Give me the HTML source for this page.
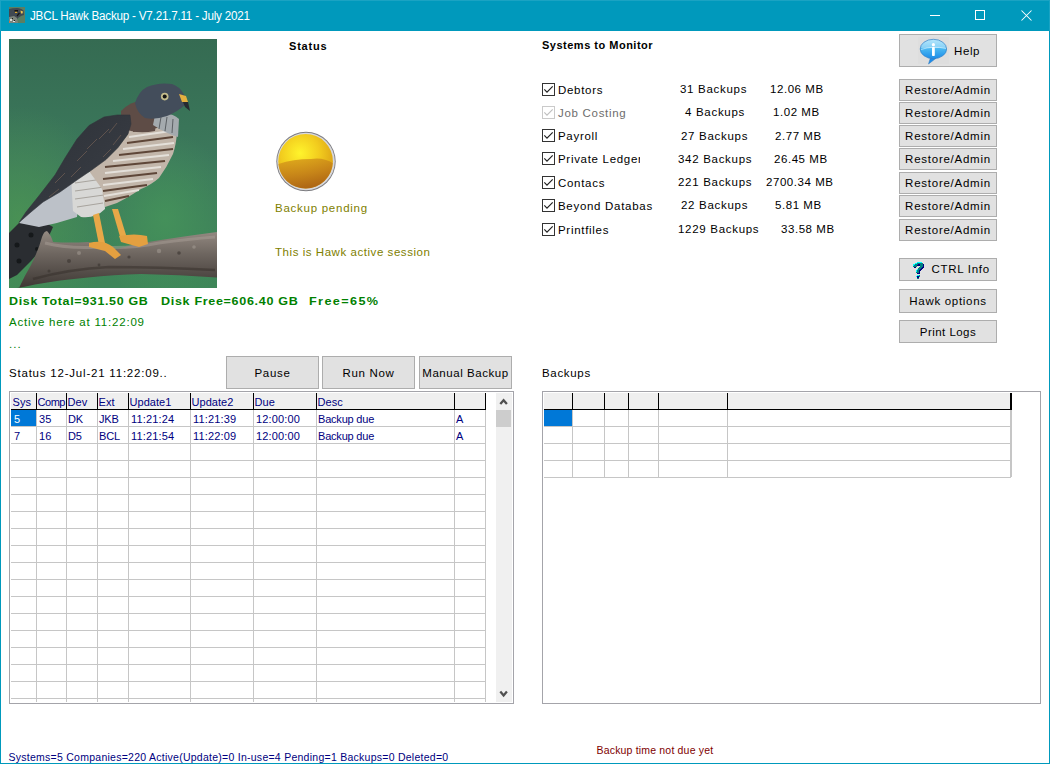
<!DOCTYPE html>
<html><head><meta charset="utf-8">
<style>
*{box-sizing:border-box;margin:0;padding:0}
html,body{width:1050px;height:764px;overflow:hidden;background:#fff}
body{position:relative;font-family:"Liberation Sans",sans-serif;font-size:12px;color:#000}
.a{position:absolute;white-space:pre;line-height:1}
.btn{position:absolute;background:#e1e1e1;border:1px solid #adadad;text-align:center;color:#000}
.btn span{position:absolute;left:0;right:0;white-space:pre;line-height:1}
.cb{position:absolute;width:13px;height:13px;border:1px solid #333;background:#fff}
.cb svg{position:absolute;left:0;top:0}
</style></head><body>

<div style="position:absolute;left:0;top:0;width:1050px;height:764px;border:1px solid #0099bc;border-top:none"></div>
<div style="position:absolute;left:0;top:0;width:1050px;height:31px;background:#0099bc"></div>
<div style="position:absolute;left:0;top:0;width:1050px;height:1px;background:#1aa3c3"></div>
<div style="position:absolute;left:0px;top:0px;width:1px;height:31px;background:#1aa3c3;"></div>
<div style="position:absolute;left:1049px;top:0px;width:1px;height:31px;background:#1aa3c3;"></div>
<svg style="position:absolute;left:9px;top:7px" width="16" height="16" viewBox="0 0 16 16">
  <rect width="16" height="16" fill="#5c7e62"/>
  <path d="M0 2 Q4 0.8 9 1 Q13 1.5 14.5 3.5 L15 8 L12 9 L9 11 L7 14 L6 16 L0 16Z" fill="#404852"/>
  <path d="M0 10 L5 9 L8 11 L9 16 L0 16Z" fill="#7c847c"/>
  <rect x="1" y="12" width="2" height="2" fill="#d8dcd8"/><rect x="4" y="14" width="2" height="1" fill="#e0e0e0"/>
  <rect x="0" y="14" width="1" height="2" fill="#c07850"/><rect x="3" y="11" width="1" height="1" fill="#1a1a1a"/><rect x="5" y="13" width="1" height="1" fill="#1a1a1a"/>
  <rect x="5.5" y="3" width="3.5" height="1.6" fill="#111"/>
  <rect x="6" y="4.8" width="2.2" height="1.2" fill="#e0a828"/>
  <path d="M11.5 3.5 L14 4.5 L13.5 6.5 L12 6.5Z" fill="#ecc454"/>
  <path d="M10.5 6 L8 9" stroke="#151515" stroke-width="1.2"/>
</svg>
<div class="a" style="left:30px;top:10px;font-size:12.5px;color:#fff;letter-spacing:-0.25px;transform-origin:0 0;transform:scaleX(0.935);">JBCL Hawk Backup - V7.21.7.11 - July 2021</div>
<div style="position:absolute;left:930px;top:15px;width:10px;height:1px;background:#fff;"></div>
<div style="position:absolute;left:975px;top:10px;width:10px;height:10px;border:1px solid #fff"></div>
<svg style="position:absolute;left:1021px;top:10px" width="11" height="11" viewBox="0 0 11 11"><path d="M0.5 0.5 L10.5 10.5 M10.5 0.5 L0.5 10.5" stroke="#fff" stroke-width="1.05"/></svg>
<svg style="position:absolute;left:9px;top:39px" width="208" height="249" viewBox="0 0 208 249">
  <defs>
    <linearGradient id="hbg" x1="0" y1="0" x2="0" y2="1">
      <stop offset="0" stop-color="#356b52"/>
      <stop offset="0.5" stop-color="#3c795c"/>
      <stop offset="1" stop-color="#3e8658"/>
    </linearGradient>
    <radialGradient id="hbl" cx="0.05" cy="0.72" r="0.45">
      <stop offset="0" stop-color="#4e9852" stop-opacity="0.7"/>
      <stop offset="1" stop-color="#4e9852" stop-opacity="0"/>
    </radialGradient>
    <radialGradient id="hbr" cx="0.75" cy="0.72" r="0.35">
      <stop offset="0" stop-color="#46955a" stop-opacity="0.8"/>
      <stop offset="1" stop-color="#46955a" stop-opacity="0"/>
    </radialGradient>
    <linearGradient id="hbr2" x1="0" y1="0" x2="0" y2="1">
      <stop offset="0" stop-color="#948a82"/>
      <stop offset="0.4" stop-color="#6e6660"/>
      <stop offset="1" stop-color="#3e3834"/>
    </linearGradient>
    <linearGradient id="hwing" x1="0" y1="0" x2="1" y2="1">
      <stop offset="0" stop-color="#2c3036"/>
      <stop offset="1" stop-color="#3c4048"/>
    </linearGradient>
  </defs>
  <rect width="208" height="249" fill="url(#hbg)"/>
  <rect width="208" height="249" fill="url(#hbl)"/>
  <rect width="208" height="249" fill="url(#hbr)"/>
  <!-- tail -->
  <path d="M0 194 L10 184 L30 180 L44 188 L36 206 L22 222 L8 236 L0 240Z" fill="#2a2d31"/>
  <g fill="#15181a"><circle cx="8" cy="206" r="2.5"/><circle cx="22" cy="196" r="2.5"/><circle cx="10" cy="222" r="2.5"/><circle cx="28" cy="210" r="2"/></g>
  <!-- grey undertail -->
  <path d="M10 184 L30 158 L50 150 L66 140 L70 160 L68 178 Q50 184 30 188Z" fill="#bcc1c8"/>
  <!-- white thigh -->
  <path d="M62 137 L94 130 L96 170 Q86 180 72 178 L64 172Z" fill="#d8d8d6"/>
  <g stroke="#a8a49e" stroke-width="1.2"><path d="M66 144 L94 140"/><path d="M66 152 L95 148"/><path d="M66 160 L95 156"/><path d="M68 168 L94 164"/></g>
  <!-- breast -->
  <path d="M118 68 Q140 68 158 76 Q167 84 168 94 Q167 106 164 115 Q158 128 150 139 Q142 146 132 150 Q120 158 108 164 L96 168 L93 150 L80 132 L97 120 L109 108 L119 95Z" fill="#c2b6aa"/>
  <g stroke="#5e4638" stroke-width="2.2" fill="none">
    <path d="M124 92 L160 86"/><path d="M118 104 L164 98"/><path d="M110 116 L164 110"/>
    <path d="M96 128 L156 122"/><path d="M94 140 L148 134"/><path d="M94 152 L138 146"/><path d="M96 162 L120 157"/>
  </g>
  <g stroke="#e4e0da" stroke-width="1.8" fill="none">
    <path d="M120 98 L162 92"/><path d="M114 110 L165 104"/><path d="M104 122 L160 116"/>
    <path d="M96 134 L152 128"/><path d="M94 146 L144 140"/><path d="M95 157 L130 151"/>
  </g>
  <!-- nape brown -->
  <path d="M112 72 Q122 62 132 62 L148 78 L146 92 Q126 96 112 88Z" fill="#5e4c46"/>
  <!-- wing -->
  <path d="M121 76 L108 76 L95 78 L80 86.5 L68 100 L56 119 L46 136 L30.6 156 L17 173 L10 183.5 L22 173 L34 163 L51 153 L68 141 L83 130.8 L97 120.6 L109 108.6 L119 95 L122 85Z" fill="url(#hwing)" stroke="#30343a" stroke-width="0.6" stroke-linejoin="round"/>
  <g stroke="#6a5a52" stroke-width="1" opacity="0.8">
    <path d="M108 84 L100 94"/><path d="M100 90 L90 100"/><path d="M112 96 L104 106"/><path d="M88 100 L78 110"/>
    <path d="M102 110 L94 118"/><path d="M78 112 L68 122"/><path d="M72 128 L62 138"/><path d="M56 134 L46 144"/><path d="M50 150 L40 158"/>
  </g>
  <!-- head -->
  <path d="M146 76 Q162 72 170 80 L169 98 Q156 94 144 86Z" fill="#a4aaae"/>
  <g stroke="#4a4e52" stroke-width="1" opacity="0.8"><path d="M152 78 L150 90"/><path d="M158 78 L156 92"/><path d="M164 80 L163 94"/></g>
  <path d="M126 64 Q130 52 138 48 Q150 43 163 45 Q171 48 174 54 L177 59 L176 66 Q168 73 158 77 Q146 81 136 79 Q128 74 126 64Z" fill="#434d5b"/>
  <path d="M170 55 L177 57 L179 63 L173 63Z" fill="#e4b040"/>
  <path d="M174 63 L179 63 L181 72 L176 68Z" fill="#262a30"/>
  <circle cx="155.7" cy="57.6" r="3.8" fill="#c4bc8c"/>
  <circle cx="155.7" cy="57.6" r="2" fill="#141414"/>
  <!-- legs -->
  <path d="M84 176 L90 174 L96 204 L90 206Z" fill="#e8a848"/>
  <path d="M103 170 L109 170 L118 199 L112 201Z" fill="#e8a848"/>
  <!-- branch -->
  <path d="M10 249 Q16 236 22 226 Q30 210 33 198 Q35 192 38 192 Q42 196 44 203 Q60 204 79 203 Q94 206 107.6 210 Q122 206 139.4 203 Q170 198 208 193 L208 238.4 Q170 236 132.3 235 Q104 236 79 238.4 Q50 241 26 245.4 Q14 248 8 249Z" fill="url(#hbr2)"/>
  <path d="M36 204 Q60 210 90 208 Q120 210 150 204 Q180 200 206 198" stroke="#a89e96" stroke-width="3" fill="none" opacity="0.5"/>
  <path d="M24 240 Q60 230 100 228 Q150 228 206 231" stroke="#302a26" stroke-width="2.5" fill="none" opacity="0.45"/>
  <g fill="#3a3430" opacity="0.6"><circle cx="60" cy="222" r="2"/><circle cx="120" cy="218" r="1.6"/><circle cx="170" cy="214" r="1.8"/><circle cx="40" cy="232" r="1.5"/><circle cx="90" cy="226" r="1.4"/></g>
  <g fill="#a8a098" opacity="0.5"><circle cx="150" cy="212" r="2.2"/><circle cx="185" cy="208" r="1.8"/><circle cx="70" cy="214" r="2"/></g>
  <!-- feet -->
  <path d="M80 204 Q94 200 104 208 L112 216 L106 220 L96 212 Q88 210 80 208Z" fill="#e4a040"/>
  <path d="M110 197 Q126 194 138 197 L139 205 L130 208 L112 203Z" fill="#e4a040"/>
</svg>

<div class="a" style="left:289px;top:41px;font-size:11px;color:#000;font-weight:bold;letter-spacing:0.8px;">Status</div>
<svg style="position:absolute;left:275px;top:130px" width="62" height="63" viewBox="0 0 62 63">
  <defs>
    <radialGradient id="yl" cx="0.4" cy="0.35" r="0.7">
      <stop offset="0" stop-color="#fff42c"/>
      <stop offset="0.5" stop-color="#f2cc1e"/>
      <stop offset="1" stop-color="#d89c14"/>
    </radialGradient>
    <linearGradient id="yb" x1="0" y1="0" x2="0.3" y2="1">
      <stop offset="0" stop-color="#dca21a"/>
      <stop offset="0.6" stop-color="#c07a18"/>
      <stop offset="1" stop-color="#a85e14"/>
    </linearGradient>
  </defs>
  <circle cx="31" cy="31.5" r="29.7" fill="#7c7c80"/>
  <circle cx="31" cy="31.5" r="28.8" fill="#d8d8dc"/>
  <circle cx="30.6" cy="31.3" r="27.3" fill="url(#yl)"/>
  <path d="M3.4 34 Q18 29 36 29 Q48 27 57.8 33 A27.3 27.3 0 0 1 3.4 34 Z" fill="url(#yb)" opacity="0.85"/>
</svg>
<div class="a" style="left:275px;top:203px;font-size:11.5px;color:#808000;letter-spacing:0.74px;">Backup pending</div>
<div class="a" style="left:275px;top:247px;font-size:11.5px;color:#808000;letter-spacing:0.55px;">This is Hawk active session</div>
<div class="a" style="left:542px;top:40px;font-size:11px;color:#000;font-weight:bold;letter-spacing:0.5px;">Systems to Monitor</div>
<div class="cb" style="left:542px;top:83px;border-color:#333"><svg width="13" height="13" viewBox="0 0 13 13"><path d="M1.3 5.3 L4 8.1 L9.7 2.3" fill="none" stroke="#222" stroke-width="1.2"/></svg></div>
<div class="a" style="left:558px;top:85px;font-size:11.5px;color:#000;letter-spacing:0.7px;">Debtors</div>
<div class="a" style="left:680px;top:84px;font-size:11.5px;color:#000;letter-spacing:0.7px;">31 Backups</div>
<div class="a" style="left:770px;top:84px;font-size:11.5px;color:#000;letter-spacing:0.55px;">12.06 MB</div>
<div class="cb" style="left:542px;top:106px;border-color:#cacaca"><svg width="13" height="13" viewBox="0 0 13 13"><path d="M1.3 5.3 L4 8.1 L9.7 2.3" fill="none" stroke="#c0c0c0" stroke-width="1.2"/></svg></div>
<div class="a" style="left:558px;top:108px;font-size:11.5px;color:#6d6d6d;letter-spacing:0.7px;">Job Costing</div>
<div class="a" style="left:685px;top:107px;font-size:11.5px;color:#000;letter-spacing:0.7px;">4 Backups</div>
<div class="a" style="left:773px;top:107px;font-size:11.5px;color:#000;letter-spacing:0.55px;">1.02 MB</div>
<div class="cb" style="left:542px;top:129px;border-color:#333"><svg width="13" height="13" viewBox="0 0 13 13"><path d="M1.3 5.3 L4 8.1 L9.7 2.3" fill="none" stroke="#222" stroke-width="1.2"/></svg></div>
<div class="a" style="left:558px;top:131px;font-size:11.5px;color:#000;letter-spacing:0.7px;">Payroll</div>
<div class="a" style="left:681px;top:131px;font-size:11.5px;color:#000;letter-spacing:0.7px;">27 Backups</div>
<div class="a" style="left:775px;top:131px;font-size:11.5px;color:#000;letter-spacing:0.55px;">2.77 MB</div>
<div class="cb" style="left:542px;top:152px;border-color:#333"><svg width="13" height="13" viewBox="0 0 13 13"><path d="M1.3 5.3 L4 8.1 L9.7 2.3" fill="none" stroke="#222" stroke-width="1.2"/></svg></div>
<div class="a" style="left:558px;top:154px;font-size:11.5px;color:#000;letter-spacing:0.7px;width:82px;overflow:hidden;height:14px;">Private Ledger</div>
<div class="a" style="left:678px;top:154px;font-size:11.5px;color:#000;letter-spacing:0.7px;">342 Backups</div>
<div class="a" style="left:774px;top:154px;font-size:11.5px;color:#000;letter-spacing:0.55px;">26.45 MB</div>
<div class="cb" style="left:542px;top:176px;border-color:#333"><svg width="13" height="13" viewBox="0 0 13 13"><path d="M1.3 5.3 L4 8.1 L9.7 2.3" fill="none" stroke="#222" stroke-width="1.2"/></svg></div>
<div class="a" style="left:558px;top:178px;font-size:11.5px;color:#000;letter-spacing:0.7px;">Contacs</div>
<div class="a" style="left:678px;top:177px;font-size:11.5px;color:#000;letter-spacing:0.7px;">221 Backups</div>
<div class="a" style="left:766px;top:177px;font-size:11.5px;color:#000;letter-spacing:0.55px;">2700.34 MB</div>
<div class="cb" style="left:542px;top:199px;border-color:#333"><svg width="13" height="13" viewBox="0 0 13 13"><path d="M1.3 5.3 L4 8.1 L9.7 2.3" fill="none" stroke="#222" stroke-width="1.2"/></svg></div>
<div class="a" style="left:558px;top:201px;font-size:11.5px;color:#000;letter-spacing:0.7px;width:96px;overflow:hidden;height:14px;">Beyond Databas</div>
<div class="a" style="left:681px;top:200px;font-size:11.5px;color:#000;letter-spacing:0.7px;">22 Backups</div>
<div class="a" style="left:775px;top:200px;font-size:11.5px;color:#000;letter-spacing:0.55px;">5.81 MB</div>
<div class="cb" style="left:542px;top:223px;border-color:#333"><svg width="13" height="13" viewBox="0 0 13 13"><path d="M1.3 5.3 L4 8.1 L9.7 2.3" fill="none" stroke="#222" stroke-width="1.2"/></svg></div>
<div class="a" style="left:558px;top:225px;font-size:11.5px;color:#000;letter-spacing:0.7px;">Printfiles</div>
<div class="a" style="left:678px;top:224px;font-size:11.5px;color:#000;letter-spacing:0.7px;">1229 Backups</div>
<div class="a" style="left:781px;top:224px;font-size:11.5px;color:#000;letter-spacing:0.55px;">33.58 MB</div>
<div class="btn" style="left:899px;top:34px;width:98px;height:33px"><div style="position:absolute;left:18px;top:2px;width:31px;height:27px;background:#dedede"></div>
  <svg style="position:absolute;left:18px;top:2px" width="31" height="28" viewBox="0 0 31 28">
    <defs>
      <linearGradient id="hb" x1="0" y1="0" x2="0" y2="1">
        <stop offset="0" stop-color="#b4e6fc"/><stop offset="0.45" stop-color="#86d0f6"/>
        <stop offset="0.47" stop-color="#4cbaf2"/><stop offset="1" stop-color="#1c8ce8"/>
      </linearGradient>
    </defs>
    <path d="M12.5 20.5 L10.5 27 L18 21.3Z" fill="#1e8ce8" stroke="#2a78c0" stroke-width="0.5"/>
    <ellipse cx="15.4" cy="12" rx="13.2" ry="9.7" fill="url(#hb)" stroke="#2f80c8" stroke-width="0.7"/>
    <path d="M3 12.5 Q15 8.5 28 11.5" stroke="#d8f2ff" stroke-width="0.8" fill="none" opacity="0.8"/>
    <circle cx="15.4" cy="7.7" r="1.6" fill="#fff"/>
    <rect x="14" y="10" width="2.8" height="9" rx="0.8" fill="#fff"/>
  </svg></div>
<div class="a" style="left:954px;top:46px;font-size:11.5px;color:#000;letter-spacing:0.6px;">Help</div>
<div class="btn" style="left:899px;top:79px;width:98px;height:22px"><span style="top:5px;font-size:11.5px;letter-spacing:0.75px">Restore/Admin</span></div>
<div class="btn" style="left:899px;top:102px;width:98px;height:22px"><span style="top:5px;font-size:11.5px;letter-spacing:0.75px">Restore/Admin</span></div>
<div class="btn" style="left:899px;top:125px;width:98px;height:22px"><span style="top:5px;font-size:11.5px;letter-spacing:0.75px">Restore/Admin</span></div>
<div class="btn" style="left:899px;top:148px;width:98px;height:22px"><span style="top:5px;font-size:11.5px;letter-spacing:0.75px">Restore/Admin</span></div>
<div class="btn" style="left:899px;top:172px;width:98px;height:22px"><span style="top:5px;font-size:11.5px;letter-spacing:0.75px">Restore/Admin</span></div>
<div class="btn" style="left:899px;top:195px;width:98px;height:22px"><span style="top:5px;font-size:11.5px;letter-spacing:0.75px">Restore/Admin</span></div>
<div class="btn" style="left:899px;top:219px;width:98px;height:22px"><span style="top:5px;font-size:11.5px;letter-spacing:0.75px">Restore/Admin</span></div>
<div class="btn" style="left:899px;top:258px;width:98px;height:23px"><svg style="position:absolute;left:0;top:0" width="96" height="21" shape-rendering="crispEdges"><rect x="17" y="3" width="5" height="1" fill="#00ffff"/><rect x="15" y="4" width="2" height="1" fill="#00ffff"/><rect x="17" y="4" width="6" height="1" fill="#008080"/><rect x="13" y="5" width="2" height="1" fill="#00ffff"/><rect x="15" y="5" width="3" height="1" fill="#008080"/><rect x="18" y="5" width="2" height="1" fill="#000080"/><rect x="20" y="5" width="3" height="1" fill="#008080"/><rect x="23" y="5" width="1" height="1" fill="#000080"/><rect x="13" y="6" width="1" height="1" fill="#00ffff"/><rect x="14" y="6" width="3" height="1" fill="#008080"/><rect x="17" y="6" width="3" height="1" fill="#000080"/><rect x="20" y="6" width="3" height="1" fill="#008080"/><rect x="23" y="6" width="1" height="1" fill="#000080"/><rect x="13" y="7" width="4" height="1" fill="#008080"/><rect x="20" y="7" width="3" height="1" fill="#008080"/><rect x="23" y="7" width="1" height="1" fill="#000080"/><rect x="14" y="8" width="2" height="1" fill="#000080"/><rect x="19" y="8" width="3" height="1" fill="#008080"/><rect x="22" y="8" width="2" height="1" fill="#000080"/><rect x="18" y="9" width="3" height="1" fill="#008080"/><rect x="21" y="9" width="2" height="1" fill="#000080"/><rect x="17" y="10" width="1" height="1" fill="#00ffff"/><rect x="18" y="10" width="2" height="1" fill="#008080"/><rect x="20" y="10" width="2" height="1" fill="#000080"/><rect x="16" y="11" width="1" height="1" fill="#00ffff"/><rect x="17" y="11" width="2" height="1" fill="#008080"/><rect x="19" y="11" width="2" height="1" fill="#000080"/><rect x="16" y="12" width="1" height="1" fill="#00ffff"/><rect x="17" y="12" width="2" height="1" fill="#008080"/><rect x="19" y="12" width="1" height="1" fill="#000080"/><rect x="16" y="13" width="3" height="1" fill="#008080"/><rect x="19" y="13" width="1" height="1" fill="#000080"/><rect x="17" y="14" width="3" height="1" fill="#000080"/><rect x="17" y="16" width="2" height="1" fill="#00ffff"/><rect x="19" y="16" width="1" height="1" fill="#008080"/><rect x="16" y="17" width="1" height="1" fill="#00ffff"/><rect x="17" y="17" width="2" height="1" fill="#000080"/><rect x="19" y="17" width="1" height="1" fill="#008080"/><rect x="17" y="18" width="2" height="1" fill="#000080"/><rect x="17" y="19" width="2" height="1" fill="#008080"/></svg></div>
<div class="a" style="left:931.5px;top:264px;font-size:11.5px;color:#000;letter-spacing:0.7px;">CTRL Info</div>
<div class="btn" style="left:899px;top:289px;width:98px;height:24px"><span style="top:6px;font-size:11.5px;letter-spacing:0.7px">Hawk options</span></div>
<div class="btn" style="left:899px;top:320px;width:98px;height:23px"><span style="top:6px;font-size:11.5px;letter-spacing:0.45px">Print Logs</span></div>
<div class="a" style="left:9px;top:296px;font-size:11px;color:#008000;font-weight:bold;letter-spacing:0.6px;transform-origin:0 0;transform:scaleX(1.13);">Disk Total=931.50 GB</div>
<div class="a" style="left:160.5px;top:296px;font-size:11px;color:#008000;font-weight:bold;letter-spacing:0.6px;transform-origin:0 0;transform:scaleX(1.14);">Disk Free=606.40 GB</div>
<div class="a" style="left:308.5px;top:296px;font-size:11px;color:#008000;font-weight:bold;letter-spacing:1.2px;transform-origin:0 0;transform:scaleX(1.15);">Free=65%</div>
<div class="a" style="left:9px;top:316.5px;font-size:11.5px;color:#008000;letter-spacing:0.8px;">Active here at 11:22:09</div>
<div class="a" style="left:9px;top:338.5px;font-size:11.5px;color:#008000;letter-spacing:1px;">...</div>
<div class="a" style="left:9px;top:368px;font-size:11.5px;color:#000;letter-spacing:0.79px;">Status 12-Jul-21 11:22:09..</div>
<div class="btn" style="left:226px;top:356px;width:93px;height:33px"><span style="top:11px;font-size:11.5px;letter-spacing:0.7px">Pause</span></div>
<div class="btn" style="left:322px;top:356px;width:93px;height:33px"><span style="top:11px;font-size:11.5px;letter-spacing:0.7px">Run Now</span></div>
<div class="btn" style="left:419px;top:356px;width:93px;height:33px"><span style="top:11px;font-size:11.5px;letter-spacing:0.55px">Manual Backup</span></div>
<div class="a" style="left:542px;top:368px;font-size:11.5px;color:#000;letter-spacing:0.67px;">Backups</div>
<div style="position:absolute;left:9px;top:391px;width:505px;height:313px;border:1px solid #a4a4aa;background:#fff"></div>
<div style="position:absolute;left:11px;top:393px;width:475px;height:16px;background:#efefef;"></div>
<div style="position:absolute;left:11px;top:409px;width:475px;height:1px;background:#000;"></div>
<div style="position:absolute;left:36px;top:393px;width:1px;height:17px;background:#000;"></div>
<div style="position:absolute;left:36px;top:410px;width:1px;height:292px;background:#c6c6c6;"></div>
<div style="position:absolute;left:66px;top:393px;width:1px;height:17px;background:#000;"></div>
<div style="position:absolute;left:66px;top:410px;width:1px;height:292px;background:#c6c6c6;"></div>
<div style="position:absolute;left:97px;top:393px;width:1px;height:17px;background:#000;"></div>
<div style="position:absolute;left:97px;top:410px;width:1px;height:292px;background:#c6c6c6;"></div>
<div style="position:absolute;left:128px;top:393px;width:1px;height:17px;background:#000;"></div>
<div style="position:absolute;left:128px;top:410px;width:1px;height:292px;background:#c6c6c6;"></div>
<div style="position:absolute;left:190px;top:393px;width:1px;height:17px;background:#000;"></div>
<div style="position:absolute;left:190px;top:410px;width:1px;height:292px;background:#c6c6c6;"></div>
<div style="position:absolute;left:253px;top:393px;width:1px;height:17px;background:#000;"></div>
<div style="position:absolute;left:253px;top:410px;width:1px;height:292px;background:#c6c6c6;"></div>
<div style="position:absolute;left:316px;top:393px;width:1px;height:17px;background:#000;"></div>
<div style="position:absolute;left:316px;top:410px;width:1px;height:292px;background:#c6c6c6;"></div>
<div style="position:absolute;left:454px;top:393px;width:1px;height:17px;background:#000;"></div>
<div style="position:absolute;left:454px;top:410px;width:1px;height:292px;background:#c6c6c6;"></div>
<div style="position:absolute;left:485px;top:393px;width:1px;height:17px;background:#000;"></div>
<div style="position:absolute;left:485px;top:410px;width:1px;height:292px;background:#c6c6c6;"></div>
<div style="position:absolute;left:11px;top:426px;width:475px;height:1px;background:#c6c6c6;"></div>
<div style="position:absolute;left:11px;top:443px;width:475px;height:1px;background:#c6c6c6;"></div>
<div style="position:absolute;left:11px;top:460px;width:475px;height:1px;background:#c6c6c6;"></div>
<div style="position:absolute;left:11px;top:477px;width:475px;height:1px;background:#c6c6c6;"></div>
<div style="position:absolute;left:11px;top:494px;width:475px;height:1px;background:#c6c6c6;"></div>
<div style="position:absolute;left:11px;top:511px;width:475px;height:1px;background:#c6c6c6;"></div>
<div style="position:absolute;left:11px;top:528px;width:475px;height:1px;background:#c6c6c6;"></div>
<div style="position:absolute;left:11px;top:545px;width:475px;height:1px;background:#c6c6c6;"></div>
<div style="position:absolute;left:11px;top:562px;width:475px;height:1px;background:#c6c6c6;"></div>
<div style="position:absolute;left:11px;top:579px;width:475px;height:1px;background:#c6c6c6;"></div>
<div style="position:absolute;left:11px;top:596px;width:475px;height:1px;background:#c6c6c6;"></div>
<div style="position:absolute;left:11px;top:613px;width:475px;height:1px;background:#c6c6c6;"></div>
<div style="position:absolute;left:11px;top:630px;width:475px;height:1px;background:#c6c6c6;"></div>
<div style="position:absolute;left:11px;top:647px;width:475px;height:1px;background:#c6c6c6;"></div>
<div style="position:absolute;left:11px;top:664px;width:475px;height:1px;background:#c6c6c6;"></div>
<div style="position:absolute;left:11px;top:681px;width:475px;height:1px;background:#c6c6c6;"></div>
<div style="position:absolute;left:11px;top:698px;width:475px;height:1px;background:#c6c6c6;"></div>
<div class="a" style="left:12.5px;top:397px;font-size:11px;color:#000080;letter-spacing:0.05px;width:23px;overflow:hidden;height:13px;">Sys</div>
<div class="a" style="left:37.5px;top:397px;font-size:11px;color:#000080;letter-spacing:-0.45px;width:28px;overflow:hidden;height:13px;">Comp</div>
<div class="a" style="left:67.5px;top:397px;font-size:11px;color:#000080;letter-spacing:0.05px;width:29px;overflow:hidden;height:13px;">Dev</div>
<div class="a" style="left:98.5px;top:397px;font-size:11px;color:#000080;letter-spacing:0.05px;width:29px;overflow:hidden;height:13px;">Ext</div>
<div class="a" style="left:129.5px;top:397px;font-size:11px;color:#000080;letter-spacing:0.05px;width:60px;overflow:hidden;height:13px;">Update1</div>
<div class="a" style="left:191.5px;top:397px;font-size:11px;color:#000080;letter-spacing:0.05px;width:61px;overflow:hidden;height:13px;">Update2</div>
<div class="a" style="left:254.5px;top:397px;font-size:11px;color:#000080;letter-spacing:0.05px;width:61px;overflow:hidden;height:13px;">Due</div>
<div class="a" style="left:317.5px;top:397px;font-size:11px;color:#000080;letter-spacing:0.05px;width:136px;overflow:hidden;height:13px;">Desc</div>
<div style="position:absolute;left:11px;top:410px;width:25px;height:16px;background:#0078d7;"></div>
<div class="a" style="left:14px;top:414px;font-size:11px;color:#fff;letter-spacing:0.15px;">5</div>
<div class="a" style="left:39px;top:414px;font-size:11px;color:#000080;letter-spacing:0.15px;">35</div>
<div class="a" style="left:68px;top:414px;font-size:11px;color:#000080;letter-spacing:-0.2px;">DK</div>
<div class="a" style="left:99px;top:414px;font-size:11px;color:#000080;letter-spacing:-0.2px;">JKB</div>
<div class="a" style="left:131px;top:414px;font-size:11px;color:#000080;letter-spacing:0.15px;">11:21:24</div>
<div class="a" style="left:193px;top:414px;font-size:11px;color:#000080;letter-spacing:0.15px;">11:21:39</div>
<div class="a" style="left:256px;top:414px;font-size:11px;color:#000080;letter-spacing:0.15px;">12:00:00</div>
<div class="a" style="left:318px;top:414px;font-size:11px;color:#000080;letter-spacing:-0.2px;">Backup due</div>
<div class="a" style="left:456px;top:414px;font-size:11px;color:#000080;letter-spacing:-0.2px;">A</div>
<div class="a" style="left:14px;top:431px;font-size:11px;color:#000080;letter-spacing:0.15px;">7</div>
<div class="a" style="left:39px;top:431px;font-size:11px;color:#000080;letter-spacing:0.15px;">16</div>
<div class="a" style="left:68px;top:431px;font-size:11px;color:#000080;letter-spacing:-0.2px;">D5</div>
<div class="a" style="left:99px;top:431px;font-size:11px;color:#000080;letter-spacing:-0.2px;">BCL</div>
<div class="a" style="left:131px;top:431px;font-size:11px;color:#000080;letter-spacing:0.15px;">11:21:54</div>
<div class="a" style="left:193px;top:431px;font-size:11px;color:#000080;letter-spacing:0.15px;">11:22:09</div>
<div class="a" style="left:256px;top:431px;font-size:11px;color:#000080;letter-spacing:0.15px;">12:00:00</div>
<div class="a" style="left:318px;top:431px;font-size:11px;color:#000080;letter-spacing:-0.2px;">Backup due</div>
<div class="a" style="left:456px;top:431px;font-size:11px;color:#000080;letter-spacing:-0.2px;">A</div>
<div style="position:absolute;left:496px;top:393px;width:16px;height:309px;background:#f0f0f0;"></div>
<div style="position:absolute;left:496px;top:410px;width:15px;height:17px;background:#cdcdcd;"></div>
<svg style="position:absolute;left:499px;top:397px" width="10" height="9" viewBox="0 0 10 9"><path d="M1.3 7 L4.6 3.2 L7.9 7" fill="none" stroke="#505050" stroke-width="2.3"/></svg>
<svg style="position:absolute;left:499px;top:690px" width="10" height="9" viewBox="0 0 10 9"><path d="M1.3 1.6 L4.6 5.4 L7.9 1.6" fill="none" stroke="#505050" stroke-width="2.3"/></svg>
<div style="position:absolute;left:542px;top:391px;width:499px;height:313px;border:1px solid #a4a4aa;background:#fff"></div>
<div style="position:absolute;left:544px;top:393px;width:467px;height:16px;background:#efefef;"></div>
<div style="position:absolute;left:544px;top:409px;width:468px;height:1px;background:#000;"></div>
<div style="position:absolute;left:572px;top:393px;width:1px;height:17px;background:#000;"></div>
<div style="position:absolute;left:572px;top:410px;width:1px;height:67px;background:#c6c6c6;"></div>
<div style="position:absolute;left:604px;top:393px;width:1px;height:17px;background:#000;"></div>
<div style="position:absolute;left:604px;top:410px;width:1px;height:67px;background:#c6c6c6;"></div>
<div style="position:absolute;left:628px;top:393px;width:1px;height:17px;background:#000;"></div>
<div style="position:absolute;left:628px;top:410px;width:1px;height:67px;background:#c6c6c6;"></div>
<div style="position:absolute;left:658px;top:393px;width:1px;height:17px;background:#000;"></div>
<div style="position:absolute;left:658px;top:410px;width:1px;height:67px;background:#c6c6c6;"></div>
<div style="position:absolute;left:727px;top:393px;width:1px;height:17px;background:#000;"></div>
<div style="position:absolute;left:727px;top:410px;width:1px;height:67px;background:#c6c6c6;"></div>
<div style="position:absolute;left:1010px;top:393px;width:2px;height:17px;background:#000;"></div>
<div style="position:absolute;left:1010px;top:410px;width:2px;height:67px;background:#c6c6c6;"></div>
<div style="position:absolute;left:544px;top:426px;width:467px;height:1px;background:#c6c6c6;"></div>
<div style="position:absolute;left:544px;top:443px;width:467px;height:1px;background:#c6c6c6;"></div>
<div style="position:absolute;left:544px;top:460px;width:467px;height:1px;background:#c6c6c6;"></div>
<div style="position:absolute;left:544px;top:477px;width:467px;height:1px;background:#c6c6c6;"></div>
<div style="position:absolute;left:544px;top:410px;width:28px;height:16px;background:#0078d7;"></div>
<div class="a" style="left:8.5px;top:752px;font-size:10.5px;color:#000080;letter-spacing:0.26px;">Systems=5 Companies=220 Active(Update)=0 In-use=4 Pending=1 Backups=0 Deleted=0</div>
<div class="a" style="left:596.5px;top:744.5px;font-size:10.5px;color:#800000;letter-spacing:0.18px;">Backup time not due yet</div>
</body></html>
